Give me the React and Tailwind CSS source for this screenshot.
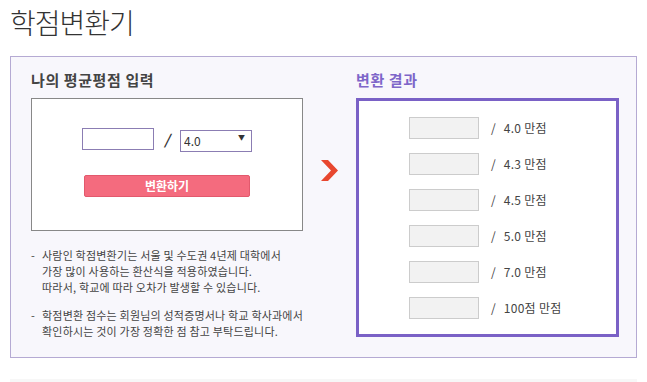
import React from 'react';

const font = { fontFamily: '"Noto Sans CJK KR", "Noto Sans", sans-serif' };

const scales = ['4.0 만점', '4.3 만점', '4.5 만점', '5.0 만점', '7.0 만점', '100점 만점'];

const Chevron = () => (
  <svg width="18" height="21" viewBox="0 0 18 21">
    <path d="M1 0 L8 0 L18 10.5 L8 21 L1 21 L11 10.5 Z" fill="#e8472f" />
  </svg>
);

export default function App() {
  return (
    <div className="w-[647px] h-[382px] bg-white overflow-hidden px-[10px]" style={font}>
      <h1 className="h-[56px] pt-[3px] text-[28px] leading-[38px] font-light text-[#333] tracking-[-1px]">
        학점변환기
      </h1>

      <div className="flex w-[627px] h-[302px] border border-[#b5aad3] bg-[#f8f7fc] pl-[20px] pt-[13px]">
        {/* 입력 */}
        <div className="w-[272px]">
          <h2 className="h-[20px] mb-[8px] text-[15px] leading-[20px] font-bold text-[#444] tracking-[0.6px]">
            나의 평균평점 입력
          </h2>
          <div className="h-[133px] border border-[#888] bg-white pt-[29px] flex flex-col items-center">
            <div className="flex items-center h-[22px]">
              <input className="w-[72px] h-[22px] border border-[#8b7db3] bg-white outline-none" />
              <span className="w-[26px] text-center text-[14px] font-bold italic text-[#333]">/</span>
              <div className="relative">
                <select className="appearance-none w-[72px] h-[22px] border border-[#8b7db3] bg-white pl-[3px] text-[12px] text-[#333] outline-none">
                  <option>4.0</option>
                </select>
                <span className="absolute right-[7px] top-[5px] text-[7px] leading-[10px] text-[#333] pointer-events-none">▼</span>
              </div>
            </div>
            <button className="mt-[25px] w-[166px] h-[22px] rounded-[2px] border border-[#e2596d] bg-[#f46b7e] text-white text-[12px] font-bold leading-[20px]">
              변환하기
            </button>
          </div>
          <div className="mt-[16px] text-[11px] leading-[16px] text-[#444] tracking-[0.2px]">
            <div className="flex">
              <span className="w-[11px] shrink-0">-</span>
              <p>
                사람인 학점변환기는 서울 및 수도권 4년제 대학에서
                <br />
                가장 많이 사용하는 환산식을 적용하였습니다.
                <br />
                따라서, 학교에 따라 오차가 발생할 수 있습니다.
              </p>
            </div>
            <div className="flex mt-[12px]">
              <span className="w-[11px] shrink-0">-</span>
              <p>
                학점변환 점수는 회원님의 성적증명서나 학교 학사과에서
                <br />
                확인하시는 것이 가장 정확한 점 참고 부탁드립니다.
              </p>
            </div>
          </div>
        </div>

        {/* 화살표 */}
        <div className="w-[53px] pl-[17px] pt-[90px]">
          <Chevron />
        </div>

        {/* 결과 */}
        <div className="w-[263px]">
          <h2 className="h-[20px] mb-[8px] text-[15px] leading-[20px] font-bold text-[#7e66c9] tracking-[0.6px]">
            변환 결과
          </h2>
          <div className="h-[239px] border-[3px] border-[#7a61c6] bg-white pt-[16px] pl-[50px] flex flex-col gap-[14px]">
            {scales.map((s) => (
              <div key={s} className="flex items-center h-[22px]">
                <input
                  readOnly
                  className="w-[70px] h-[22px] border border-[#cccccc] bg-[#f2f2f2] outline-none"
                />
                <span className="ml-[12px] text-[12px] text-[#444]">/</span>
                <span className="ml-[8px] text-[12px] text-[#444] tracking-[0.3px]">{s}</span>
              </div>
            ))}
          </div>
        </div>
      </div>

      <div className="mt-[21px] h-[10px] bg-[#f7f7f7]" />
    </div>
  );
}
